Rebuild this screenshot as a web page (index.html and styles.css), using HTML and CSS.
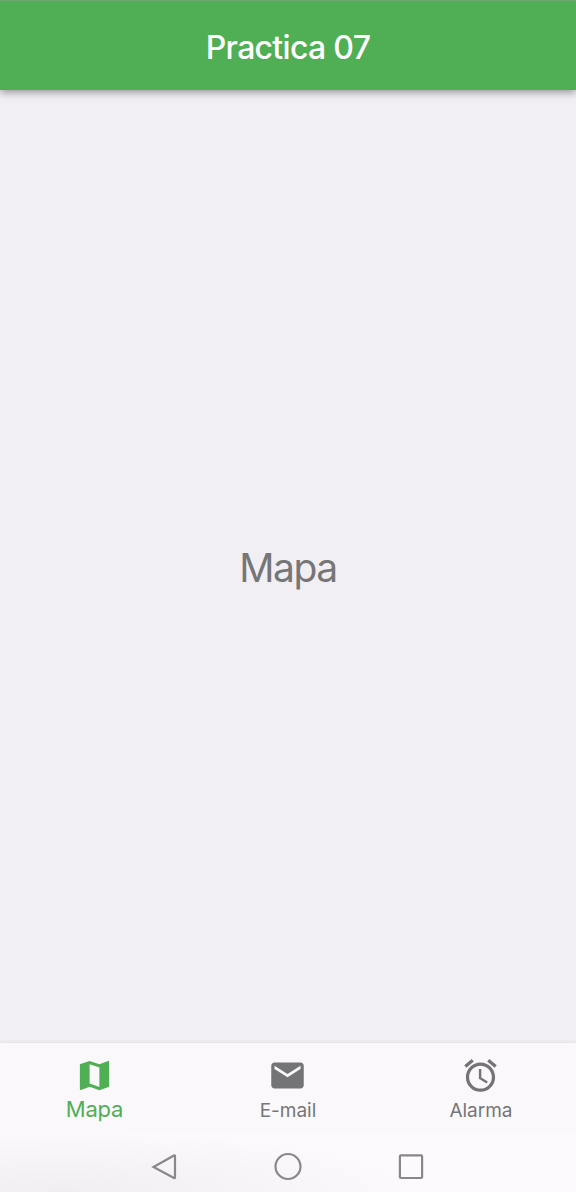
FILE: index.html
```
<!DOCTYPE html>
<html lang="es">
<head>
<meta charset="utf-8">
<title>Practica 07</title>
<link rel="stylesheet" href="styles.css">
</head>
<body>
<header class="appbar"><h1 class="title">Practica 07</h1></header>
<main class="content"><p class="heading">Mapa</p></main>
<nav class="tabs">
  <a class="tab active">
    <svg class="icon" viewBox="0 0 24 24"><path d="M20.5 3l-.16.03L15 5.1 9 3 3.36 4.9c-.21.07-.36.25-.36.48V20.5c0 .28.22.5.5.5l.16-.03L9 18.9l6 2.1 5.64-1.9c.21-.07.36-.25.36-.48V3.5c0-.28-.22-.5-.5-.5zM15 19l-6-2.11V5l6 2.11V19z"/></svg>
    <span class="label">Mapa</span>
  </a>
  <a class="tab">
    <svg class="icon" viewBox="0 0 24 24"><path d="M20 4H4c-1.100 0-1.990.9-1.990 2L2 18c0 1.100.9 2 2 2h16c1.100 0 2-.9 2-2V6c0-1.100-.9-2-2-2zm0 4l-8 5-8-5V6l8 5 8-5v2z"/></svg>
    <span class="label">E-mail</span>
  </a>
  <a class="tab last">
    <svg class="icon" viewBox="0 0 24 24"><path d="M22 5.720l-4.600-3.860-1.290 1.530 4.600 3.860L22 5.720zM7.880 3.390L6.600 1.860 2 5.710l1.290 1.530 4.590-3.850zM12.500 8H11v6l4.750 2.850.75-1.230-4-2.370V8zM12 4c-4.970 0-9 4.030-9 9s4.020 9 9 9c4.970 0 9-4.030 9-9s-4.030-9-9-9zm0 16c-3.870 0-7-3.130-7-7s3.130-7 7-7 7 3.130 7 7-3.130 7-7 7z"/></svg>
    <span class="label">Alarma</span>
  </a>
</nav>
<footer class="system">
  <svg class="key" viewBox="0 0 30 30"><path d="M3.500 15 L24 3.500 Q25 3 25 4.200 V25.300 Q25 26.500 24 26 Z"/></svg>
  <svg class="key" viewBox="0 0 30 30"><circle cx="15" cy="14.500" r="12.500"/></svg>
  <svg class="key" viewBox="0 0 30 30"><rect x="3.900" y="3.400" width="22.200" height="22.600" rx="1"/></svg>
</footer>
</body>
</html>
```
FILE: styles.css
```
* { box-sizing: border-box; }
body {
  margin: 0;
  height: 1192px;
  display: flex;
  flex-direction: column;
  overflow: hidden;
  background: #f1eff3;
  color: #767577;
  font-family: Inter, "Open Sans", sans-serif;
}
.appbar {
  height: 90px;
  flex: none;
  display: flex;
  align-items: center;
  justify-content: center;
  padding-top: 3px;
  background: #50ae55;
  border-top: 1px solid #6da76f;
  box-shadow: 0 2px 8px rgba(0, 0, 0, .42);
}
.title {
  margin: 0;
  color: #fff;
  font-size: 32px;
  font-weight: 500;
  letter-spacing: -.7px;
}
.content {
  flex: 1;
  display: flex;
  align-items: center;
  justify-content: center;
}
.heading {
  margin: 0;
  padding-top: 2px;
  font-size: 39px;
  line-height: 48px;
  letter-spacing: -1.4px;
}
.tabs {
  height: 90px;
  flex: none;
  display: flex;
  background: #faf8fb;
  box-shadow: 0 -1px 3px rgba(0, 0, 0, .07);
}
.tab {
  width: 33.3333%;
  display: flex;
  flex-direction: column;
  align-items: center;
  padding-top: 13px;
}
.icon {
  width: 39px;
  height: 39px;
  fill: #747375;
}
.label {
  margin-top: 4px;
  font-size: 19px;
  line-height: 24px;
}
.active {
  color: #50ae55;
  padding-right: 3px;
}
.last { padding-left: 2px; }
.active .icon { fill: #50ae55; }
.active .label {
  margin-top: 2px;
  font-size: 22px;
  letter-spacing: -.2px;
}
.system {
  height: 59px;
  flex: none;
  display: flex;
  justify-content: center;
  gap: 93px;
  padding-top: 19px;
  background: radial-gradient(ellipse 370px 65px at 60px 100%, #f0eef1, transparent), #fcfafd;
}
.key {
  width: 30px;
  height: 30px;
  fill: none;
  stroke: #89878a;
  stroke-width: 2.200;
}
```
